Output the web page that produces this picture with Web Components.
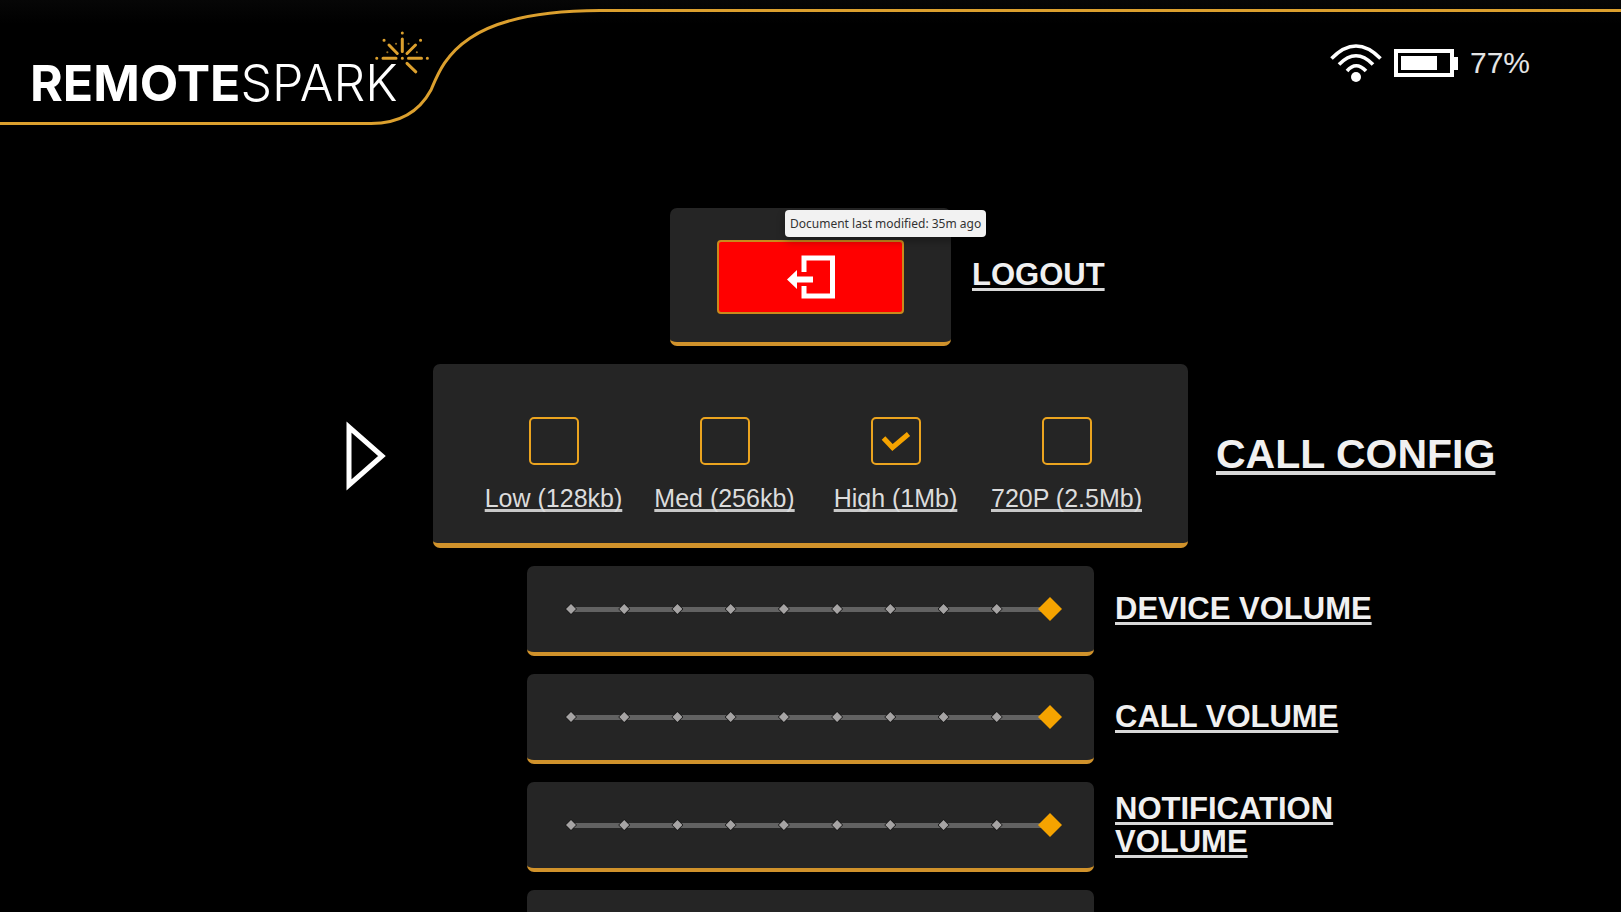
<!DOCTYPE html>
<html lang="en">
<head>
<meta charset="utf-8">
<title>RemoteSpark</title>
<style>
    html, body { height: 100%; }
    body {
        margin: 0;
        overflow: hidden;
        background: #000;
        color: #f0f0f0;
        font-family: "Liberation Sans", Arial, sans-serif;
        --accent: #f5a300;
        --edge: #d0922b;
        --panel: #252525;
    }
</style>
</head>
<body>
<settings-view></settings-view>

<script>
class AppHeader extends HTMLElement {

    constructor() {
        super();
        this.root = this.attachShadow({mode: 'open'});
    }

    connectedCallback() {
        this.root.innerHTML =
            `<style>
                :host { display: block; }
                header {
                    display: grid;
                    height: 126px;
                    background: linear-gradient(#060606, #000 24px);
                }
                header > * { grid-area: 1 / 1; }
                .line { width: 100%; height: 126px; fill: none; stroke: #dca02e; }
                .bar {
                    display: flex;
                    justify-content: space-between;
                    align-items: center;
                    padding: 0 91px 0 30px;
                }
                h1 {
                    margin: 0;
                    padding-top: 40px;
                    font: 300 50px/60px Inter, sans-serif;
                    color: #fff;
                }
                b { font-weight: 700; }
                .status { display: flex; align-items: center; gap: 12px; font-size: 30px; color: #e4e4e4; }
            </style>
            <header>
                <svg class="line" aria-hidden="true">
                    <path stroke-width="3" d="M0 123.5H371C400 123.5 419 112 431 90C443 62 460 10.5 600 10.5H6000"/>
                    <g stroke-width="3" stroke-linecap="round">
                        <path d="M383 58.3H396M408.5 58.3H421.5M402.3 39V51.5M389 45L397.3 53.5M415.5 45L407 53.5M407 63.3L415.8 71.8"/>
                        <path d="M376.7 58.3h.1M427.3 58.3h.1M402.3 33v.1M384 40.3h.1M420.5 40.3h.1M402.3 58.3h.1"/>
                        <path stroke-width="2" opacity=".7" d="M396 43.7h.1M408.5 43.7h.1M387.3 52.3h.1M416.8 52.3h.1"/>
                    </g>
                </svg>
                <div class="bar">
                    <h1><b>REMOTE</b>SPARK</h1>
                    <div class="status">
                        <svg width="52" height="38" viewBox="0 0 52 38" fill="none" stroke="#fff" stroke-width="3.6" aria-hidden="true">
                            <path d="M1.5 14.5Q26 -10.5 50.5 14.5M9 20.5Q26 3 43 20.5M17 27Q26 16.5 36 27"/>
                            <circle cx="26" cy="33" r="5" fill="#fff" stroke="none"/>
                        </svg>
                        <svg width="64" height="28" viewBox="0 0 64 28" aria-hidden="true">
                            <path d="M2 2H58V26H2Z" fill="none" stroke="#fff" stroke-width="4"/>
                            <path d="M7 7H43V21H7ZM60 8H64V21H60Z" fill="#fff"/>
                        </svg>
                        <span>77%</span>
                    </div>
                </div>
            </header>`;
    }
}

// one line of the settings list: [marker] [panel] [label], panel always centred
class SettingRow extends HTMLElement {

    constructor() {
        super();
        this.root = this.attachShadow({mode: 'open'});
    }

    connectedCallback() {
        this.root.innerHTML =
            `<style>
                :host {
                    display: grid;
                    grid-template-columns: minmax(0, 1fr) auto minmax(0, 1fr);
                    align-items: center;
                    column-gap: 21px;
                    --width: 567px;
                    --height: 90px;
                    --border: 4px;
                }
                :host([size=small]) { --width: 281px; --height: 138px; }
                :host([size=large]) { --width: 755px; --height: 184px; --border: 5px; column-gap: 28px; }
                .marker { display: flex; justify-content: flex-end; padding-right: 19px; }
                .panel {
                    position: relative;
                    display: grid;
                    align-items: center;
                    box-sizing: border-box;
                    width: min(var(--width), 70vw);
                    min-height: var(--height);
                    border-bottom: var(--border) solid var(--edge);
                    border-radius: 7px;
                    background: var(--panel);
                }
                .label {
                    max-width: 260px;
                    padding-bottom: 5px;
                    font-size: 31px;
                    font-weight: bold;
                    line-height: 33px;
                    text-decoration: underline 3px #d8d8d8;
                    text-underline-offset: 3px;
                    text-decoration-skip-ink: none;
                }
                :host([size=large]) .label {
                    max-width: none;
                    font-size: 41px;
                    line-height: 44px;
                    text-decoration-thickness: 4px;
                }
            </style>
            <div class="marker"><slot name="marker"></slot></div>
            <div class="panel"><slot></slot></div>
            <div class="label"><slot name="label"></slot></div>`;
    }
}

class LogoutButton extends HTMLElement {

    constructor() {
        super();
        this.root = this.attachShadow({mode: 'open'});
    }

    connectedCallback() {
        this.root.innerHTML =
            `<style>
                :host { display: grid; place-items: center; padding-top: 4px; }
                button {
                    display: grid;
                    place-items: center;
                    width: 187px;
                    height: 74px;
                    padding: 0;
                    border: 2px solid #c98a1c;
                    border-radius: 4px;
                    background: #f00;
                }
            </style>
            <button type="button" aria-label="LOGOUT">
                <svg width="48" height="44" viewBox="0 0 48 44" aria-hidden="true">
                    <path d="M17 17V3H45.5V41H17V31" fill="none" stroke="#fff" stroke-width="5"/>
                    <path d="M0 24.5L10 15V21.5H26V27.5H10V34Z" fill="#fff"/>
                </svg>
            </button>`;
    }
}

class HoverTip extends HTMLElement {

    constructor() {
        super();
        this.root = this.attachShadow({mode: 'open'});
    }

    connectedCallback() {
        this.root.innerHTML =
            `<style>
                :host {
                    position: absolute;
                    left: 115px;
                    top: 2px;
                    padding: 5px;
                    border-radius: 4px;
                    background: #f2f2f2;
                    box-shadow: 0 4px 8px rgba(0, 0, 0, .3);
                    color: #333;
                    font: 12px/17px "Noto Sans", sans-serif;
                    white-space: nowrap;
                }
            </style>
            <slot></slot>`;
    }
}

class CheckOption extends HTMLElement {

    constructor() {
        super();
        this.root = this.attachShadow({mode: 'open'});
    }

    connectedCallback() {
        this.root.innerHTML =
            `<style>
                :host { display: block; }
                label { display: flex; flex-direction: column; align-items: center; gap: 18px; }
                .box { display: grid; width: 50px; height: 48px; }
                .box > * { grid-area: 1 / 1; }
                input {
                    appearance: none;
                    box-sizing: border-box;
                    width: 50px;
                    height: 48px;
                    margin: 0;
                    border: 2px solid #eba41f;
                    border-radius: 5px;
                }
                svg { visibility: hidden; pointer-events: none; }
                input:checked + svg { visibility: visible; }
                .text {
                    font-size: 25px;
                    line-height: 30px;
                    color: #dcdcdc;
                    white-space: nowrap;
                    text-decoration: underline 3px #c8c8c8;
                    text-underline-offset: 2px;
                    text-decoration-skip-ink: none;
                }
            </style>
            <label>
                <span class="box">
                    <input type="checkbox"${this.hasAttribute('checked') ? ' checked' : ''}>
                    <svg width="50" height="48" fill="none" stroke="#f5a300" stroke-width="5"><path d="M12.5 21L21.5 30.5L37.5 17"/></svg>
                </span>
                <span class="text"><slot></slot></span>
            </label>`;
    }
}

class VolumeSetting extends HTMLElement {

    constructor() {
        super();
        this.root = this.attachShadow({mode: 'open'});
    }

    connectedCallback() {
        const ticks = '<i></i>'.repeat(10);
        this.root.innerHTML =
            `<style>
                :host { display: block; }
                .slider { display: grid; align-items: center; margin: 0 32px; }
                .slider > * { grid-area: 1 / 1; }
                .track { height: 5px; margin: 0 12px; background: #626262; }
                .ticks { display: flex; justify-content: space-between; margin: 0 6px; }
                i {
                    display: grid;
                    place-items: center;
                    width: 12px;
                    height: 12px;
                    background: #181818;
                    clip-path: polygon(50% 0, 100% 50%, 50% 100%, 0 50%);
                }
                i::before {
                    content: "";
                    width: 10px;
                    height: 10px;
                    background: #a6a4a4;
                    clip-path: inherit;
                }
                input {
                    appearance: none;
                    width: 100%;
                    height: 24px;
                    margin: 0;
                    background: none;
                }
                input::-webkit-slider-thumb {
                    appearance: none;
                    width: 24px;
                    height: 24px;
                    background: var(--accent);
                    clip-path: polygon(50% 0, 100% 50%, 50% 100%, 0 50%);
                }
            </style>
            <setting-row>
                <div class="slider">
                    <div class="track"></div>
                    <div class="ticks">${ticks}</div>
                    <input id="level" type="range" min="1" max="10" value="10">
                </div>
                <label slot="label" for="level"><slot></slot></label>
            </setting-row>`;
    }
}

class SettingsView extends HTMLElement {

    constructor() {
        super();
        this.root = this.attachShadow({mode: 'open'});
    }

    connectedCallback() {
        this.root.innerHTML =
            `<style>
                :host { display: block; }
                main { display: flex; flex-direction: column; gap: 18px; padding-top: 82px; }
                .options {
                    display: grid;
                    grid-template-columns: repeat(4, 1fr);
                    margin: 22px 36px 0 35px;
                }
            </style>
            <app-header></app-header>
            <main>
                <setting-row size="small">
                    <logout-button></logout-button>
                    <hover-tip>Document last modified: 35m ago</hover-tip>
                    <span slot="label">LOGOUT</span>
                </setting-row>
                <setting-row size="large">
                    <svg slot="marker" width="40" height="70" viewBox="0 0 40 70" fill="none" stroke="#fff" stroke-width="5" aria-hidden="true">
                        <path d="M3 6V64L36 35Z"/>
                    </svg>
                    <div class="options">
                        <check-option>Low (128kb)</check-option>
                        <check-option>Med (256kb)</check-option>
                        <check-option checked>High (1Mb)</check-option>
                        <check-option>720P (2.5Mb)</check-option>
                    </div>
                    <span slot="label">CALL CONFIG</span>
                </setting-row>
                <volume-setting>DEVICE VOLUME</volume-setting>
                <volume-setting>CALL VOLUME</volume-setting>
                <volume-setting>NOTIFICATION VOLUME</volume-setting>
                <setting-row></setting-row>
            </main>`;
    }
}

customElements.define('app-header', AppHeader);
customElements.define('setting-row', SettingRow);
customElements.define('logout-button', LogoutButton);
customElements.define('hover-tip', HoverTip);
customElements.define('check-option', CheckOption);
customElements.define('volume-setting', VolumeSetting);
customElements.define('settings-view', SettingsView);
</script>
</body>
</html>
